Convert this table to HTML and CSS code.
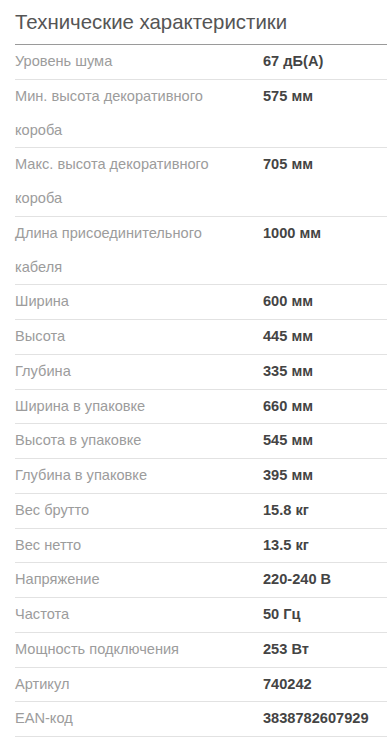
FILE: index.html
```html
<!DOCTYPE html>
<html lang="ru">
<head>
<meta charset="utf-8">
<link rel="stylesheet" href="styles.css">
</head>
<body>
<section class="specs">
  <h2 class="title">Технические характеристики</h2>
  <dl class="table">
    <div class="row"><dt>Уровень шума</dt><dd>67 дБ(A)</dd></div>
    <div class="row"><dt>Мин. высота декоративного короба</dt><dd>575 мм</dd></div>
    <div class="row"><dt>Макс. высота декоративного короба</dt><dd>705 мм</dd></div>
    <div class="row"><dt>Длина присоединительного кабеля</dt><dd>1000 мм</dd></div>
    <div class="row"><dt>Ширина</dt><dd>600 мм</dd></div>
    <div class="row"><dt>Высота</dt><dd>445 мм</dd></div>
    <div class="row"><dt>Глубина</dt><dd>335 мм</dd></div>
    <div class="row"><dt>Ширина в упаковке</dt><dd>660 мм</dd></div>
    <div class="row"><dt>Высота в упаковке</dt><dd>545 мм</dd></div>
    <div class="row"><dt>Глубина в упаковке</dt><dd>395 мм</dd></div>
    <div class="row"><dt>Вес брутто</dt><dd>15.8 кг</dd></div>
    <div class="row"><dt>Вес нетто</dt><dd>13.5 кг</dd></div>
    <div class="row"><dt>Напряжение</dt><dd>220-240 В</dd></div>
    <div class="row"><dt>Частота</dt><dd>50 Гц</dd></div>
    <div class="row"><dt>Мощность подключения</dt><dd>253 Вт</dd></div>
    <div class="row"><dt>Артикул</dt><dd>740242</dd></div>
    <div class="row"><dt>EAN-код</dt><dd>3838782607929</dd></div>
  </dl>
</section>
</body>
</html>
```
FILE: styles.css
```css
html, body {
  margin: 0;
  padding: 0;
  background: #fff;
}
body {
  font-family: "Liberation Sans", Arial, sans-serif;
}
.specs {
  padding-left: 15px;
}
.title {
  margin: 0;
  font-size: 20.4px;
  font-weight: normal;
  color: #555;
  line-height: 44px;
  height: 44px;
  border-bottom: 1px solid #9a9a9a;
}
.table {
  margin: 0;
}
.row {
  display: grid;
  grid-template-columns: 248px 1fr;
  border-bottom: 1px solid #e2e2e2;
  font-size: 14.6px;
  line-height: 33.75px;
}
.row dt {
  color: #9c9c9c;
  padding-right: 40px;
}
.row dd {
  margin: 0;
  color: #444;
  font-weight: bold;
}
```
